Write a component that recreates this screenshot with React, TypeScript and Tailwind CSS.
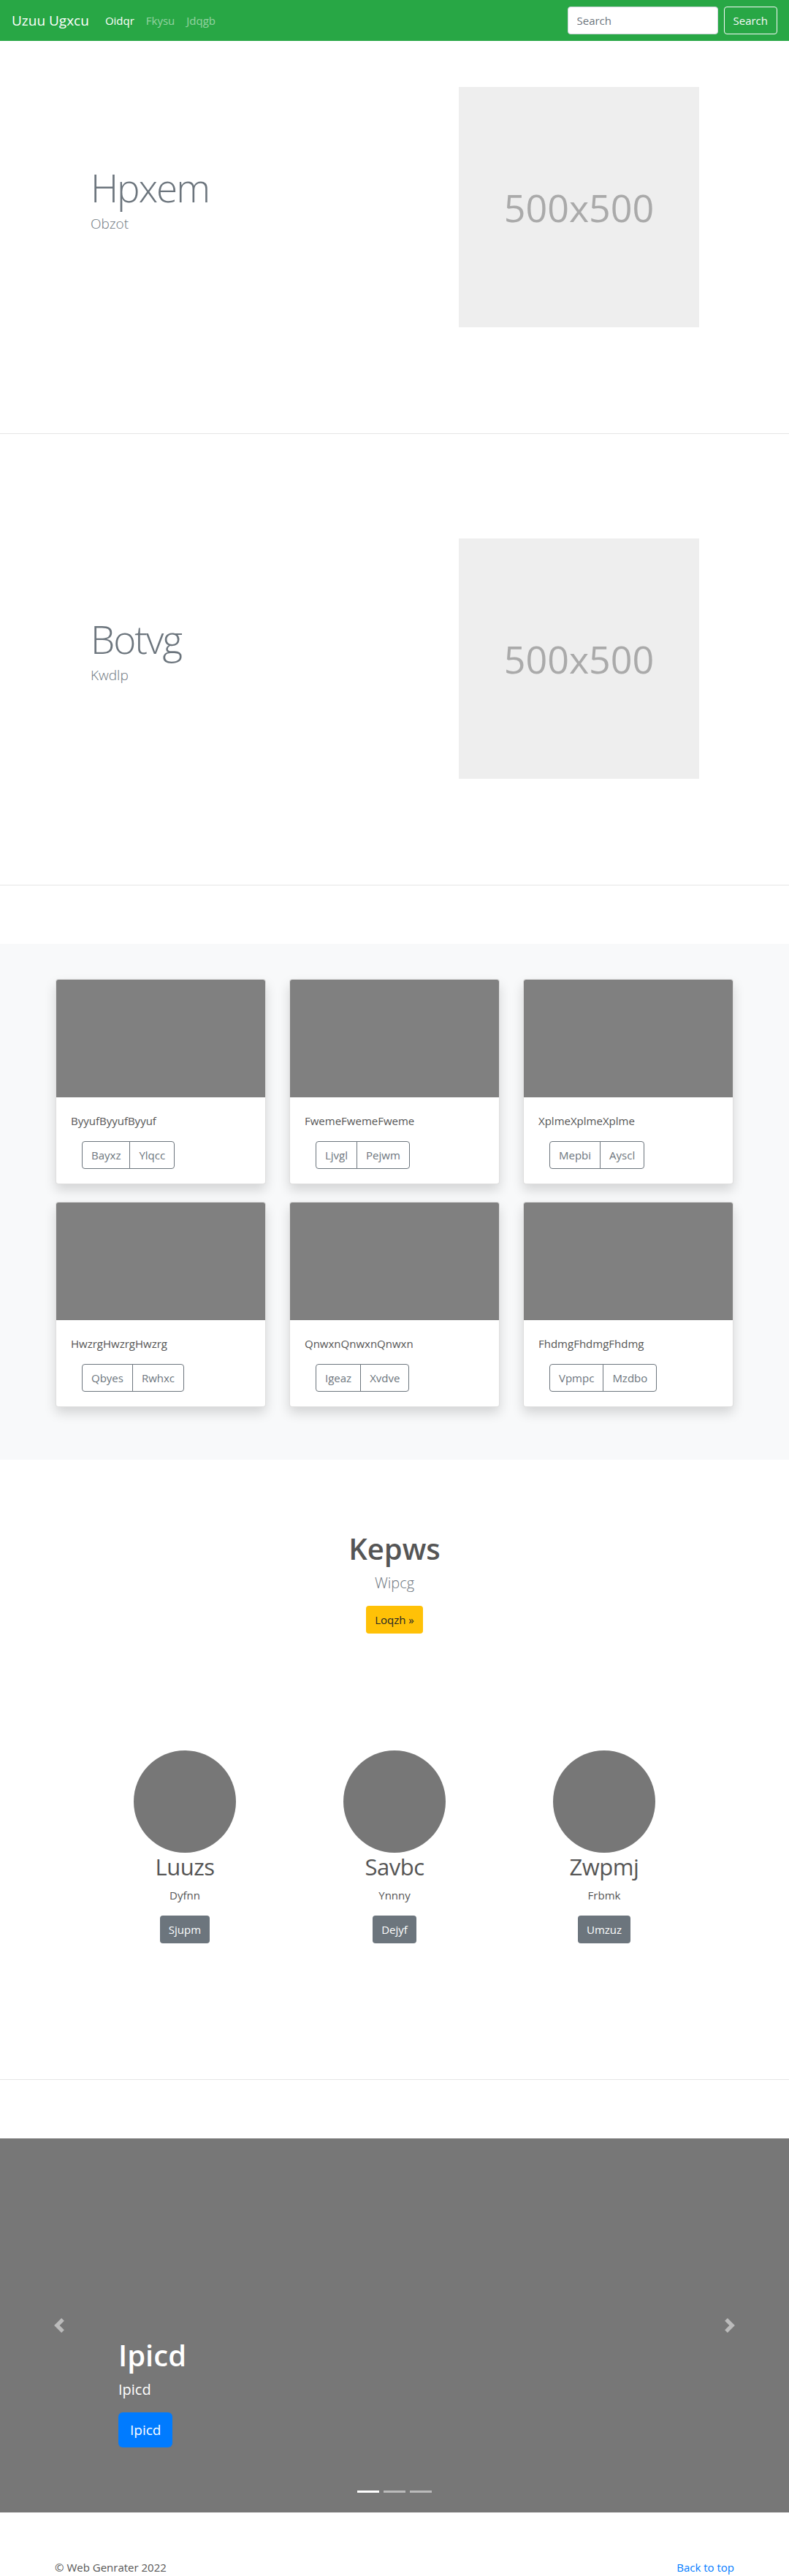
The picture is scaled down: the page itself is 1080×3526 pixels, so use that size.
const cards = [
  { title: "ByyufByyufByyuf", a: "Bayxz", b: "Ylqcc" },
  { title: "FwemeFwemeFweme", a: "Ljvgl", b: "Pejwm" },
  { title: "XplmeXplmeXplme", a: "Mepbi", b: "Ayscl" },
  { title: "HwzrgHwzrgHwzrg", a: "Qbyes", b: "Rwhxc" },
  { title: "QnwxnQnwxnQnwxn", a: "Igeaz", b: "Xvdve" },
  { title: "FhdmgFhdmgFhdmg", a: "Vpmpc", b: "Mzdbo" },
]

const team = [
  { name: "Luuzs", sub: "Dyfnn", btn: "Sjupm" },
  { name: "Savbc", sub: "Ynnny", btn: "Dejyf" },
  { name: "Zwpmj", sub: "Frbmk", btn: "Umzuz" },
]

const Feature = ({ title, sub }: { title: string; sub: string }) => (
  <div className="flex items-center pt-[63px] pb-[65px]">
    <div className="w-[628px] pl-[124px]">
      <h2 className="text-[53px] font-light leading-none tracking-[-2px] text-[#6c757d]">{title}</h2>
      <p className="mt-[8px] mb-4 text-[19px] font-light leading-[30px] text-[#6c757d]">{sub}</p>
    </div>
    <div className="flex h-[329px] w-[329px] items-center justify-center bg-[#eeeeee]">
      <span className="text-[52px] leading-none text-[#aaaaaa]">500x500</span>
    </div>
  </div>
)

const Card = ({ title, a, b }: { title: string; a: string; b: string }) => (
  <div className="overflow-hidden rounded border border-black/[0.125] bg-white shadow-[0_8px_16px_rgba(0,0,0,0.15)]">
    <div className="h-[161px] bg-[#808080]" />
    <div className="p-5">
      <p className="mb-4 text-[15px] leading-6 text-[#555]">{title}</p>
      <div className="ml-[15px] inline-flex">
        <button className="h-[38px] rounded-l border border-[#6c757d] px-3 text-[15px] text-[#6c757d]">{a}</button>
        <button className="-ml-px h-[38px] rounded-r border border-[#6c757d] px-3 text-[15px] text-[#6c757d]">{b}</button>
      </div>
    </div>
  </div>
)

export default function App() {
  return (
    <div className="min-h-[3526px] bg-white font-['Open_Sans',sans-serif] text-[#555]">
      {/* navbar */}
      <nav className="flex h-14 items-center justify-between bg-[#28a745] px-4">
        <div className="flex items-center">
          <span className="mr-[14px] text-[19px] leading-[30px] text-white">Uzuu Ugxcu</span>
          <ul className="flex text-[15px]">
            <li className="px-2 text-white">Oidqr</li>
            <li className="px-2 text-white/50">Fkysu</li>
            <li className="px-2 text-white/50">Jdqgb</li>
          </ul>
        </div>
        <div className="flex items-center">
          <input
            placeholder="Search"
            className="h-[38px] w-[206px] rounded border border-[#ced4da] bg-white px-3 text-[15px] text-[#495057] placeholder:text-[#6c757d]"
          />
          <button className="ml-2 h-[38px] rounded border border-[#f8f9fa] px-3 text-[15px] text-[#f8f9fa]">Search</button>
        </div>
      </nav>

      <Feature title="Hpxem" sub="Obzot" />
      <hr className="my-20 border-[#e6e6e6]" />
      <Feature title="Botvg" sub="Kwdlp" />
      <hr className="my-20 border-[#e6e6e6]" />

      {/* album */}
      <section className="bg-[#f8f9fa] py-12">
        <div className="mx-auto grid w-[928px] grid-cols-3 gap-x-8 gap-y-6 pb-6">
          {cards.map((c) => (
            <Card key={c.title} {...c} />
          ))}
        </div>
      </section>

      {/* call to action */}
      <section className="flex flex-col items-center pt-[98px]">
        <h1 className="text-[40px] font-semibold leading-[48px] text-[#555]">Kepws</h1>
        <p className="mt-2 mb-4 text-[20px] font-light leading-[30px] text-[#6c757d]">Wipcg</p>
        <button className="h-[38px] rounded bg-[#ffc107] px-3 text-[15px] text-[#212529]">Loqzh »</button>
      </section>

      {/* team */}
      <section className="mx-auto mt-[160px] grid w-[861px] grid-cols-3 pb-[106px]">
        {team.map((t) => (
          <div key={t.name} className="flex flex-col items-center">
            <div className="h-[140px] w-[140px] rounded-full bg-[#777]" />
            <h2 className="text-[31px] leading-[38px] tracking-[-0.5px] text-[#555]">{t.name}</h2>
            <p className="mt-2 mb-4 text-[15px] leading-6 text-[#555]">{t.sub}</p>
            <button className="h-[38px] rounded bg-[#6c757d] px-3 text-[15px] text-white">{t.btn}</button>
          </div>
        ))}
      </section>
      <hr className="my-20 border-[#e6e6e6]" />

      {/* carousel */}
      <div className="relative h-[512px] bg-[#777]">
        <div className="absolute inset-y-0 left-0 flex w-[15%] items-center justify-center opacity-50">
          <svg width="20" height="20" viewBox="0 0 8 8" fill="#fff">
            <path d="M5.25 0l-4 4 4 4 1.5-1.5L4.25 4l2.5-2.5L5.25 0z" />
          </svg>
        </div>
        <div className="absolute inset-y-0 right-0 flex w-[15%] items-center justify-center opacity-50">
          <svg width="20" height="20" viewBox="0 0 8 8" fill="#fff">
            <path d="M2.75 0l-1.5 1.5L3.75 4l-2.5 2.5L2.75 8l4-4-4-4z" />
          </svg>
        </div>
        <div className="absolute bottom-[89px] left-[15%] flex flex-col items-start text-white">
          <h1 className="mb-2 text-[40px] font-semibold leading-[48px]">Ipicd</h1>
          <p className="mb-4 text-[20px] leading-[30px]">Ipicd</p>
          <button className="h-12 rounded-md bg-[#007bff] px-4 text-[19px] text-white">Ipicd</button>
        </div>
        <div className="absolute bottom-[27px] left-0 right-0 flex justify-center">
          <span className="mx-[3px] h-[3px] w-[30px] bg-white" />
          <span className="mx-[3px] h-[3px] w-[30px] bg-white/50" />
          <span className="mx-[3px] h-[3px] w-[30px] bg-white/50" />
        </div>
      </div>

      {/* footer */}
      <footer className="mx-auto flex w-[930px] justify-between pt-[63px] text-[15px] leading-6">
        <p className="text-[#555]">© Web Genrater 2022</p>
        <a href="#" className="text-[#007bff]">Back to top</a>
      </footer>
    </div>
  )
}
